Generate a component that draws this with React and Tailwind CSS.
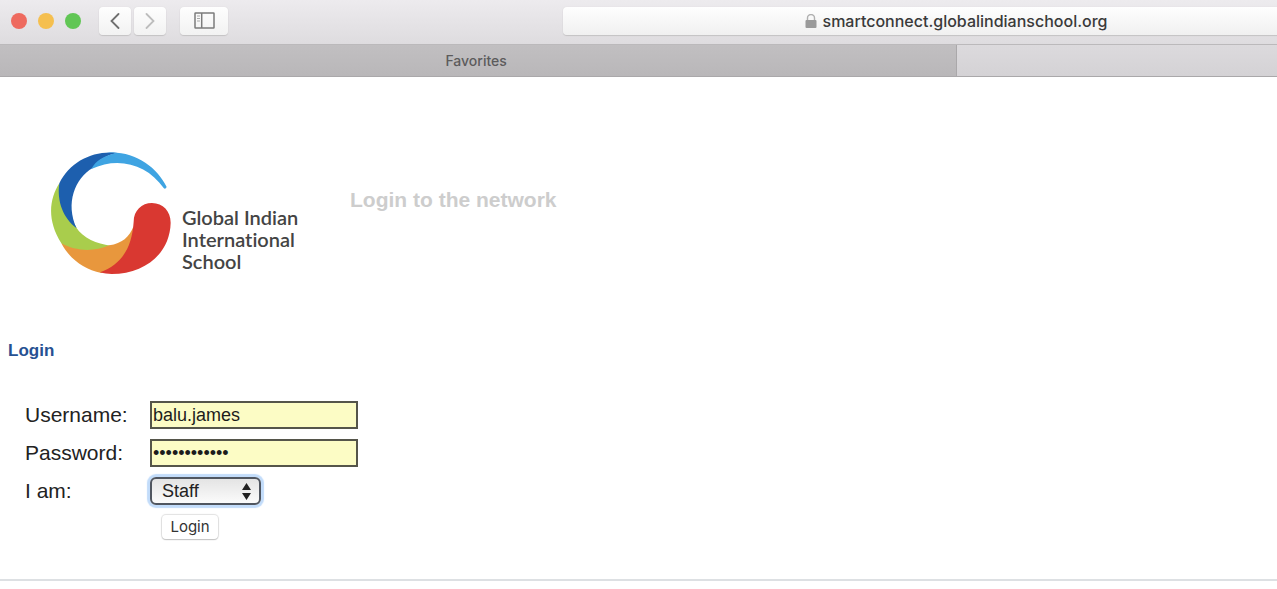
import React from "react";

const toolButton =
  "flex h-7 items-center justify-center rounded-[4px] bg-linear-to-b from-[#fefefe] to-[#f2f2f2] shadow-[0_1px_1px_#c4c2c4,0_0_1px_#cfcdcf]";

function Toolbar() {
  return (
    <header className="flex h-11 items-center overflow-hidden bg-linear-to-b from-[#edebee] to-[#dedcdf] pb-[3px] pl-[11px]">
      <div className="flex shrink-0 gap-[11px]">
        <span className="size-4 rounded-full bg-[#ee6a5f]" />
        <span className="size-4 rounded-full bg-[#f5bf4f]" />
        <span className="size-4 rounded-full bg-[#61c655]" />
      </div>
      <nav className="ml-[18px] flex shrink-0 gap-[3px]">
        <button type="button" aria-label="Back" className={`${toolButton} w-8`}>
          <svg width="10" height="16" viewBox="0 0 10 16" fill="none" stroke="#6f6f6f" strokeWidth="1.8" strokeLinecap="round">
            <path d="M8.5 1 1.5 8l7 7" />
          </svg>
        </button>
        <button type="button" aria-label="Forward" className={`${toolButton} w-8`}>
          <svg width="10" height="16" viewBox="0 0 10 16" fill="none" stroke="#bdbdbd" strokeWidth="1.8" strokeLinecap="round">
            <path d="m1.5 1 7 7-7 7" />
          </svg>
        </button>
      </nav>
      <button type="button" aria-label="Sidebar" className={`${toolButton} ml-[14px] w-12 shrink-0`}>
        <svg width="21" height="17" viewBox="0 0 21 17" fill="none" stroke="#7c7c7c" strokeWidth="1.5">
          <rect x="1" y="1" width="19" height="15" rx="0.5" />
          <path d="M7.7 1v15" />
          <path d="M3 4h3M3 6.5h3M3 9h3" stroke="#a8a8a8" strokeWidth="1" />
        </svg>
      </button>
      <div className="-mr-[72px] ml-[335px] flex h-7 min-w-0 flex-1 items-center justify-center gap-[6px] rounded-[4px] bg-linear-to-b from-[#fefefe] to-[#f0f0f0] font-['Inter',sans-serif] text-base font-medium text-[#3a3a3a] shadow-[0_1px_1px_#c4c2c4,0_0_1px_#cfcdcf]">
        <svg width="12" height="14" viewBox="0 0 12 14" aria-hidden="true">
          <path d="M2.5 7V4a3.5 3.5 0 0 1 7 0v3" fill="none" stroke="#b0b0b0" strokeWidth="1.4" />
          <rect x="0.5" y="6" width="11" height="8" rx="1" fill="#9a9a9a" />
        </svg>
        <span>smartconnect.globalindianschool.org</span>
      </div>
    </header>
  );
}

function TabBar() {
  return (
    <div className="flex h-[33px] border-y border-t-[#bbb9bb] border-b-[#aaa8aa] font-['Inter',sans-serif] text-sm font-medium text-[#5c5b5c]">
      <div className="flex flex-[956_1_0%] items-center justify-center border-r border-[#aaa8aa] bg-linear-to-b from-[#c1bfc1] to-[#b9b7b9] pr-1">
        Favorites
      </div>
      <div className="flex-[321_1_0%] bg-linear-to-b from-[#dcdadd] to-[#d4d2d5]" />
    </div>
  );
}

function Logo() {
  return (
    <div className="flex w-[300px] shrink-0">
      <svg width="124" height="126" viewBox="30 30 372 378" aria-hidden="true">
        <path fill="#a9cd4c" d="M58 130C28 178 20 240 64 310C100 345 160 345 212 317C170 312 130 295 108 262L75 190Z" />
        <path fill="#e8973d" d="M64 310C88 355 130 388 184 399C245 375 285 325 281 258C268 292 246 310 208 316C160 337 105 333 64 310Z" />
        <path fill="#d93831" d="M281 245C281 212 305 189 336 189C369 189 392 214 392 248C390 340 315 402 215 402C203 402 192 400 180 397C248 372 276 320 281 245Z" />
        <path fill="#1d5fae" d="M232 39C160 30 90 65 58 130C50 185 70 235 110 265C75 190 105 115 158 84C175 60 200 45 232 39Z" />
        <path fill="#3fa4e2" d="M200 38C280 30 352 80 380 141Q376 149 371 144C322 73 235 48 154 87C168 62 190 48 227 40Z" />
      </svg>
      <p className="ml-2 mt-14 whitespace-nowrap font-['Lato',sans-serif] text-xl leading-[22px] font-semibold text-[#444] [font-variant-ligatures:none]">
        Global Indian
        <br />
        International
        <br />
        School
      </p>
    </div>
  );
}

const field =
  "h-7 w-52 border-2 border-[#55554a] bg-[#fcfcc5] px-px text-lg text-[#1c1c1c] outline-none";

export default function App() {
  return (
    <div className="bg-white font-['Liberation_Sans',Arial,sans-serif] text-[#222]">
      <Toolbar />
      <TabBar />
      <main>
        <div className="flex pl-[50px] pt-[73px]">
          <Logo />
          <h1 className="mt-9 text-[21px] leading-7 font-bold text-[#cdcdcd]">Login to the network</h1>
        </div>
        <h2 className="mt-[63px] pl-2 text-[17px] leading-6 font-bold text-[#265192]">Login</h2>
        <form
          className="mt-[38px] grid grid-cols-[125px_auto] items-center justify-start gap-y-[10px] pl-[25px] text-[21px] leading-7"
          onSubmit={(e) => e.preventDefault()}
        >
          <label htmlFor="username">Username:</label>
          <input id="username" type="text" defaultValue="balu.james" className={field} />
          <label htmlFor="password">Password:</label>
          <input id="password" type="password" defaultValue="abcdefghijkl" className={field} />
          <label htmlFor="role">I am:</label>
          <div className="relative w-[111px]">
            <select
              id="role"
              className="block h-7 w-full appearance-none rounded-md border-2 border-[#505660] bg-linear-to-b from-[#e4e4e4] to-[#fbfbfb] pl-[10px] text-lg leading-6 text-[#222] shadow-[0_0_1px_3px_#c2dcfa] outline-none"
            >
              <option>Staff</option>
              <option>Student</option>
              <option>Parent</option>
            </select>
            <svg className="pointer-events-none absolute top-[6px] right-[10px]" width="9" height="17" viewBox="0 0 9 17" fill="#222" aria-hidden="true">
              <path d="M4.5 0 9 7H0ZM4.5 17 0 10h9Z" />
            </svg>
          </div>
          <button
            type="submit"
            className="col-start-2 ml-3 h-6 w-14 rounded-[4px] bg-white font-['Inter',sans-serif] text-[15px] leading-6 text-[#333] shadow-[0_1px_1px_#c4c4c4,0_0_1px_1px_#e2e2e2]"
          >
            Login
          </button>
        </form>
        <hr className="mt-10 border-t-2 border-[#dde0e3]" />
      </main>
    </div>
  );
}
